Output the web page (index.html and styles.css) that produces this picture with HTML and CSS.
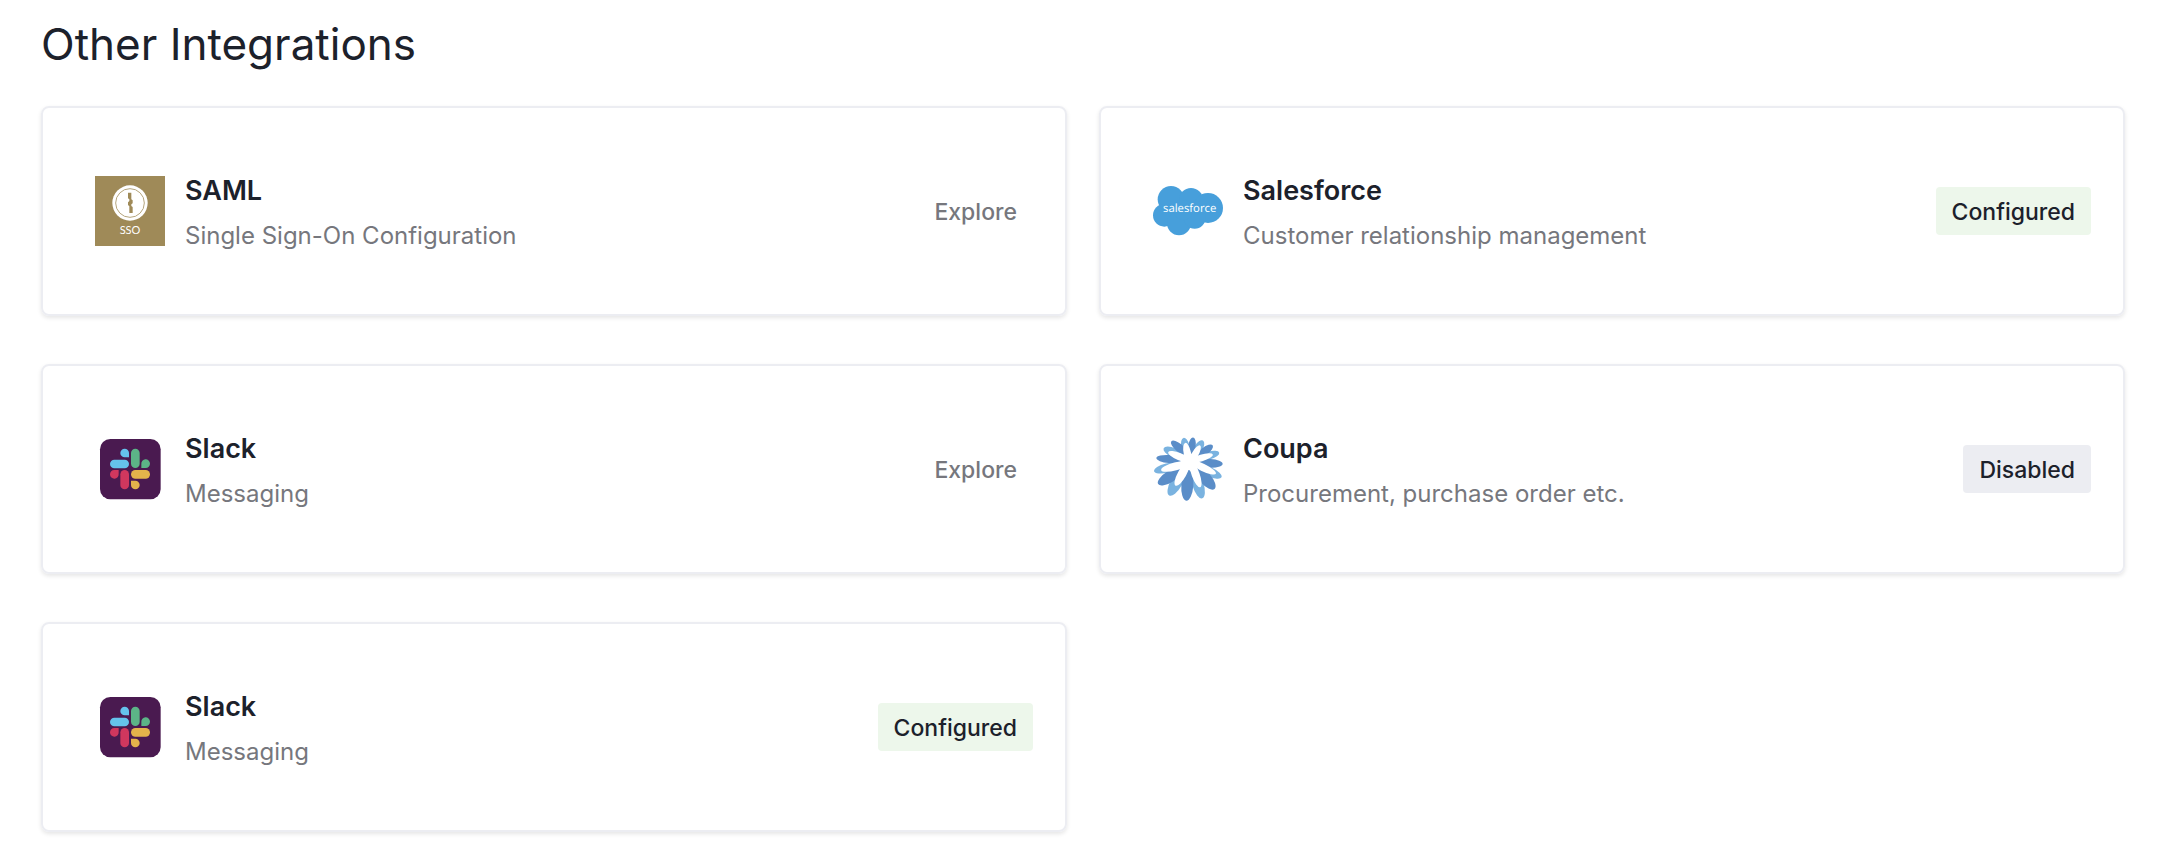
FILE: index.html
```
<!DOCTYPE html>
<html lang="en">
<head>
    <meta charset="UTF-8">
    <meta name="viewport" content="width=device-width, initial-scale=1.0">
    <title>Other Integrations</title>
    <link rel="stylesheet" href="styles.css">
</head>
<body>
    <!-- Slack logo, used by two cards -->
    <svg class="sprite" aria-hidden="true">
        <symbol id="slack-logo" viewBox="45 42 210 210">
            <rect x="60" y="57" width="182" height="181" rx="31" fill="#4a1a50"/>
            <path d="M147 112V99a13 13 0 1 0-13 13z" fill="#65c3ec"/>
            <rect x="90" y="119" width="57" height="26" rx="13" fill="#65c3ec"/>
            <rect x="153" y="86" width="26" height="58" rx="13" fill="#5cb487"/>
            <path d="M184 144v-12a13 13 0 1 1 13 12z" fill="#5cb487"/>
            <path d="M116 150v12a13 13 0 1 1-13-12z" fill="#d0375e"/>
            <rect x="121" y="150" width="26" height="58" rx="13" fill="#d0375e"/>
            <rect x="153" y="150" width="57" height="26" rx="13" fill="#e4b34b"/>
            <path d="M153 182v13a13 13 0 1 0 13-13z" fill="#e4b34b"/>
        </symbol>
    </svg>

    <main class="integrations">
        <h1>Other Integrations</h1>

        <div class="card-grid">
            <section class="card">
                <svg class="logo" viewBox="45 48 210 210" aria-hidden="true">
                    <rect x="45" y="48" width="210" height="210" fill="#9f8a58"/>
                    <circle cx="150" cy="129" r="53" fill="#fff"/>
                    <circle cx="150" cy="129" r="43" fill="none" stroke="#b5a57d" stroke-width="3"/>
                    <path d="M144 98h10v20l4 3v9l-4 3v5l4 3v18h-10v-20l-4-4v-8l4-4v-5l-4-3z" fill="#9f8a58"/>
                    <text class="sso-text" x="150" y="221" text-anchor="middle">SSO</text>
                </svg>
                <div class="info">
                    <h2>SAML</h2>
                    <p>Single Sign-On Configuration</p>
                </div>
                <button type="button" class="status explore">Explore</button>
            </section>

            <section class="card">
                <svg class="logo" viewBox="39 18 210 210" aria-hidden="true">
                    <g fill="#479fdb">
                        <circle cx="93" cy="88" r="40"/>
                        <circle cx="153" cy="90" r="36"/>
                        <circle cx="204" cy="114" r="45"/>
                        <circle cx="73" cy="136" r="34"/>
                        <circle cx="117" cy="160" r="36"/>
                        <circle cx="164" cy="143" r="33"/>
                        <circle cx="130" cy="120" r="30"/>
                    </g>
                    <text class="salesforce-text" x="149" y="127" text-anchor="middle">salesforce</text>
                </svg>
                <div class="info">
                    <h2>Salesforce</h2>
                    <p>Customer relationship management</p>
                </div>
                <span class="status configured">Configured</span>
            </section>

            <section class="card">
                <svg class="logo" aria-hidden="true"><use href="#slack-logo"/></svg>
                <div class="info">
                    <h2>Slack</h2>
                    <p>Messaging</p>
                </div>
                <button type="button" class="status explore">Explore</button>
            </section>

            <section class="card">
                <svg class="logo" viewBox="39 42 210 210" aria-hidden="true">
                    <g fill="#7ab3e0">
                        <ellipse cx="136" cy="78" rx="12" ry="25" transform="rotate(-13 136 78)"/>
                        <ellipse cx="175" cy="85" rx="13" ry="27" transform="rotate(31 175 85)"/>
                        <ellipse cx="100" cy="98" rx="32" ry="14" transform="rotate(25 100 98)"/>
                        <ellipse cx="206" cy="107" rx="33" ry="12" transform="rotate(-16 206 107)"/>
                        <ellipse cx="81" cy="144" rx="40" ry="14" transform="rotate(-14 81 144)"/>
                        <ellipse cx="210" cy="156" rx="38" ry="14" transform="rotate(25 210 156)"/>
                        <ellipse cx="109" cy="188" rx="18" ry="44" transform="rotate(29 109 188)"/>
                        <ellipse cx="174" cy="193" rx="17" ry="44" transform="rotate(-17 174 193)"/>
                    </g>
                    <g fill="#5a8dc8">
                        <ellipse cx="156" cy="77" rx="11" ry="25" transform="rotate(8 156 77)"/>
                        <ellipse cx="117" cy="83" rx="12" ry="30" transform="rotate(-50 117 83)"/>
                        <ellipse cx="194" cy="94" rx="12" ry="30" transform="rotate(53 194 94)"/>
                        <ellipse cx="87" cy="117" rx="38" ry="12" transform="rotate(4 87 117)"/>
                        <ellipse cx="211" cy="130" rx="37" ry="13" transform="rotate(3 211 130)"/>
                        <ellipse cx="90" cy="170" rx="42" ry="17" transform="rotate(-32 90 170)"/>
                        <ellipse cx="196" cy="175" rx="42" ry="18" transform="rotate(49 196 175)"/>
                        <ellipse cx="142" cy="196" rx="18" ry="46" transform="rotate(4 142 196)"/>
                    </g>
                    <g fill="#fff">
                        <circle cx="149" cy="126" r="24"/>
                        <ellipse cx="142" cy="99" rx="11" ry="31" transform="rotate(-12 142 99)"/>
                        <ellipse cx="165" cy="103" rx="10" ry="31" transform="rotate(30 165 103)"/>
                        <ellipse cx="118" cy="110" rx="36" ry="11" transform="rotate(23 118 110)"/>
                        <ellipse cx="184" cy="114" rx="36" ry="10" transform="rotate(-17 184 114)"/>
                        <ellipse cx="106" cy="139" rx="44" ry="12" transform="rotate(-15 106 139)"/>
                        <ellipse cx="188" cy="142" rx="44" ry="11" transform="rotate(26 188 142)"/>
                        <ellipse cx="126" cy="162" rx="13" ry="40" transform="rotate(29 126 162)"/>
                        <ellipse cx="167" cy="164" rx="12" ry="40" transform="rotate(-20 167 164)"/>
                    </g>
                </svg>
                <div class="info">
                    <h2>Coupa</h2>
                    <p>Procurement, purchase order etc.</p>
                </div>
                <span class="status disabled">Disabled</span>
            </section>

            <section class="card">
                <svg class="logo" aria-hidden="true"><use href="#slack-logo"/></svg>
                <div class="info">
                    <h2>Slack</h2>
                    <p>Messaging</p>
                </div>
                <span class="status configured">Configured</span>
            </section>
        </div>
    </main>
</body>
</html>
```
FILE: styles.css
```
* {
    margin: 0;
    padding: 0;
    box-sizing: border-box;
}

body {
    font-family: Inter, "Liberation Sans", sans-serif;
    background-color: #fff;
    color: #1c212b;
}

.sprite {
    display: none;
}

.integrations {
    padding: 12px 33px 24px 41px;
}

h1 {
    font-size: 44px;
    font-weight: 400;
    line-height: 64px;
    margin-bottom: 30px;
}

/* Cards */
.card-grid {
    display: grid;
    grid-template-columns: 1fr 1fr;
    gap: 48px 32px;
}

.card {
    display: flex;
    align-items: center;
    min-height: 210px;
    padding: 32px 32px 32px 52px;
    border: 2px solid #ecedf2;
    border-radius: 8px;
    box-shadow: 0 2px 4px rgba(0, 0, 0, 0.1);
}

.logo {
    width: 70px;
    height: 70px;
    flex-shrink: 0;
    margin-right: 20px;
}

.sso-text {
    font-family: Lato, sans-serif;
    font-size: 33px;
    fill: #fff;
    text-rendering: geometricPrecision;
}

.salesforce-text {
    font-family: "Open Sans", sans-serif;
    font-size: 34px;
    fill: #fff;
    text-rendering: geometricPrecision;
}

.info {
    flex: 1;
    padding-top: 6px;
}

.info h2 {
    font-size: 27px;
    font-weight: 600;
    line-height: 44px;
}

.info p {
    font-size: 24px;
    line-height: 46px;
    color: #76777d;
}

/* Status labels */
.status {
    padding: 9px 16px 7px;
    border: none;
    border-radius: 4px;
    font-family: inherit;
    font-size: 23px;
    font-weight: 500;
    line-height: 32px;
}

.explore {
    background: none;
    color: #76777d;
    cursor: pointer;
}

.explore:hover {
    color: #1c212b;
}

.configured {
    background-color: #edf7eb;
}

.disabled {
    background-color: #ecedf2;
}
```
